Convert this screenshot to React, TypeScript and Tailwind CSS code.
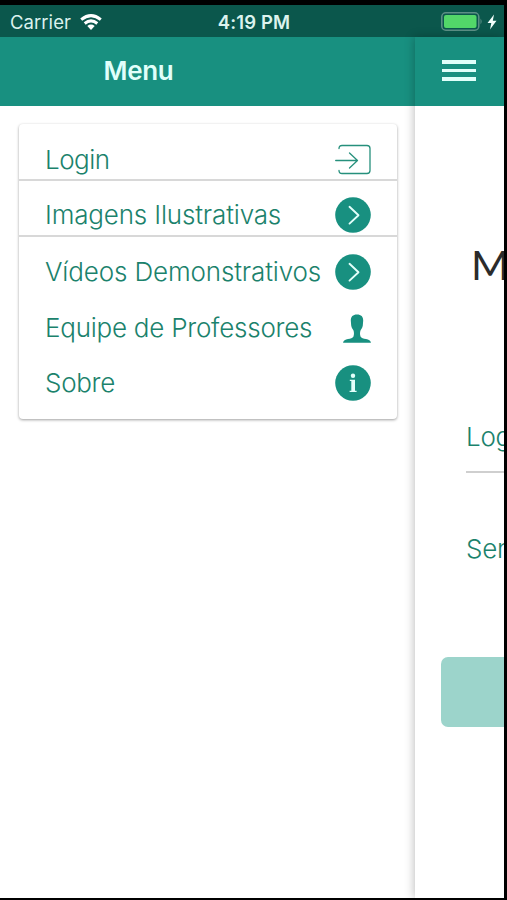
import type { ReactNode } from "react"

type MenuItemProps = {
    label: string
    icon: ReactNode
    divider?: boolean
    spacing: string
    offset: string
}

const LoginIcon = () => (
    <svg viewBox="0 0 36 32" className="w-9 h-8" fill="none" stroke="#26907c" strokeWidth="1.300" strokeLinecap="round" strokeLinejoin="round">
        <path d="M4 4.500q0-3 3-3H32q3 0 3 3v22q0 3-3 3H7q-3 0-3-3" />
        <path d="M.7 16.500H22.500M14.500 9l8 7.500-8 7.500" />
    </svg>
)

const ChevronIcon = () => (
    <svg viewBox="0 0 36 36" className="size-9" fill="none">
        <circle cx="18" cy="18" r="17.800" fill="#189080" />
        <path d="M14.500 9.800l9 8.400-9 8.400" stroke="#e3fffa" strokeWidth="1.900" strokeLinecap="round" strokeLinejoin="round" />
    </svg>
)

const PersonIcon = () => (
    <svg viewBox="0 0 28 29" className="w-7 h-[29px]" fill="#189080">
        <path d="M14 .5C9.800.5 7.800 2.800 7.800 6.500l.4 5c.3 1.900 1 3.200 2.200 4.700.7 1.800.8 4 .1 6.300-.8 1.800-3 2.100-5.500 2.600-2.800.5-4.500 1.400-5 3.700h28c-.5-2.300-2.200-3.200-5-3.700-2.500-.5-4.700-.8-5.500-2.600-.7-2.300-.6-4.500.1-6.300 1.200-1.500 1.900-2.800 2.200-4.700l.4-5C20.200 2.800 18.200.5 14 .5z" />
    </svg>
)

const InfoIcon = () => (
    <svg viewBox="0 0 36 36" className="size-9">
        <circle cx="18" cy="18" r="17.800" fill="#189080" />
        <circle cx="18" cy="10.800" r="2.200" fill="#e3fffa" />
        <path d="M14.800 14.800h5.200v10.900h1.600v1.300h-7v-1.300h1.700v-9.600h-1.500z" fill="#e3fffa" />
    </svg>
)

const MenuItem = ({ label, icon, divider, spacing, offset }: MenuItemProps) => (
    <li className={`flex h-14 items-center justify-between px-[26px] ${offset} ${divider ? "border-b-2 border-[#d8d8d8]" : ""}`}>
        <span className={`whitespace-nowrap text-[26px] font-[350] leading-10 ${spacing}`}>{label}</span>
        <span className="shrink-0">{icon}</span>
    </li>
)

const StatusBar = () => (
    <div className="grid h-8 shrink-0 grid-cols-[1fr_auto_1fr] items-center bg-[#0b574c] pl-[10px] pr-[7px] text-[#dcf3ee]">
        <div className="flex items-center gap-[9px]">
            <span className="pt-px text-[18.500px] leading-8 tracking-[0.050px]">Carrier</span>
            <svg viewBox="0 0 22 16" className="h-4 w-[22px]" fill="none" stroke="#fff" strokeWidth="3">
                <path d="M1.200 5.600Q11-2.400 20.800 5.600" />
                <path d="M4.700 9.500Q11 4.300 17.300 9.500" />
                <path d="M11 16l-3.700-4.100q3.700-2.700 7.400 0z" fill="#fff" stroke="none" />
            </svg>
        </div>
        <span className="pl-px pt-px text-[18.500px] font-semibold leading-[31px] tracking-[0.150px]">4:19 PM</span>
        <div className="flex items-center justify-end gap-1">
            <svg viewBox="0 0 42 19" className="h-[19px] w-[42px]">
                <rect x=".8" y=".8" width="37" height="17.400" rx="4" fill="none" stroke="#5d8f86" strokeWidth="1.500" />
                <rect x="3" y="3" width="32.500" height="13" rx="2" fill="#52d769" />
                <path d="M39.500 6.500q2.300 3 0 6z" fill="#5d8f86" />
            </svg>
            <svg viewBox="0 0 10 16" className="h-4 w-[10px]" fill="#f3fffc">
                <path d="M7 .5L.5 9h3.800L3 15.500 9.500 6.800H5.800z" />
            </svg>
        </div>
    </div>
)

const SideMenu = () => (
    <aside className="flex w-[415px] shrink-0 flex-col">
        <header className="flex h-[69px] items-center justify-center bg-[#189080] pb-[2px] pr-[138px]">
            <h1 className="text-[26px] font-semibold tracking-[-0.300px] text-[#e0fffa]">Menu</h1>
        </header>
        <ul className="ml-[19px] mr-[18px] mt-[18px] h-[295px] rounded-[4px] bg-white pt-px text-[#1b826c] shadow-[0_1px_3px_rgba(0,0,0,0.380)]">
            <MenuItem label="Login" icon={<LoginIcon />} spacing="tracking-[-0.500px]" offset="pt-4" divider />
            <MenuItem label="Imagens Ilustrativas" icon={<ChevronIcon />} spacing="tracking-[-0.160px]" offset="pt-[14px]" divider />
            <MenuItem label="Vídeos Demonstrativos" icon={<ChevronIcon />} spacing="tracking-[-0.140px]" offset="pt-[14px]" />
            <MenuItem label="Equipe de Professores" icon={<PersonIcon />} spacing="tracking-[-0.240px]" offset="pt-[14px]" />
            <MenuItem label="Sobre" icon={<InfoIcon />} spacing="tracking-[-0.300px]" offset="pt-3" />
        </ul>
    </aside>
)

const LoginPage = () => (
    <main className="flex min-w-0 flex-1 flex-col overflow-hidden bg-white shadow-[-1px_0_9px_rgba(0,0,0,0.250)]">
        <header className="flex h-[69px] shrink-0 items-center bg-[#189080] pb-[2px] pl-[27px]">
            <button className="flex w-[34px] flex-col gap-[5px]" aria-label="Menu">
                <span className="h-[3.500px] bg-[#e0fffa]" />
                <span className="h-[3.500px] bg-[#e0fffa]" />
                <span className="h-[3.500px] bg-[#e0fffa]" />
            </button>
        </header>
        <p className="mt-[134px] h-[50px] pl-[56px] font-['Lato'] text-[41px] leading-[50px] text-[#2b2b2b]">M</p>
        <div className="ml-[51px] mt-[122px] h-[61px] border-b-2 border-[#cfcfcf] text-[26px] font-[350] leading-[50px] tracking-[-0.300px] text-[#1b826c]">Login</div>
        <div className="ml-[51px] mt-[51px] h-[61px] text-[26px] font-[350] leading-[50px] tracking-[-0.300px] text-[#1b826c]">Senha</div>
        <button className="ml-[26px] mt-[72px] h-[70px] w-[300px] shrink-0 rounded-[7px] bg-[#9cd4cb]" aria-label="Login" />
    </main>
)

export default function App() {
    return (
        <div className="flex h-[900px] w-[507px] flex-col overflow-hidden border-b-2 border-r-3 border-t-5 border-black bg-white font-['Inter',sans-serif]">
            <StatusBar />
            <div className="flex min-h-0 flex-1">
                <SideMenu />
                <LoginPage />
            </div>
        </div>
    )
}
